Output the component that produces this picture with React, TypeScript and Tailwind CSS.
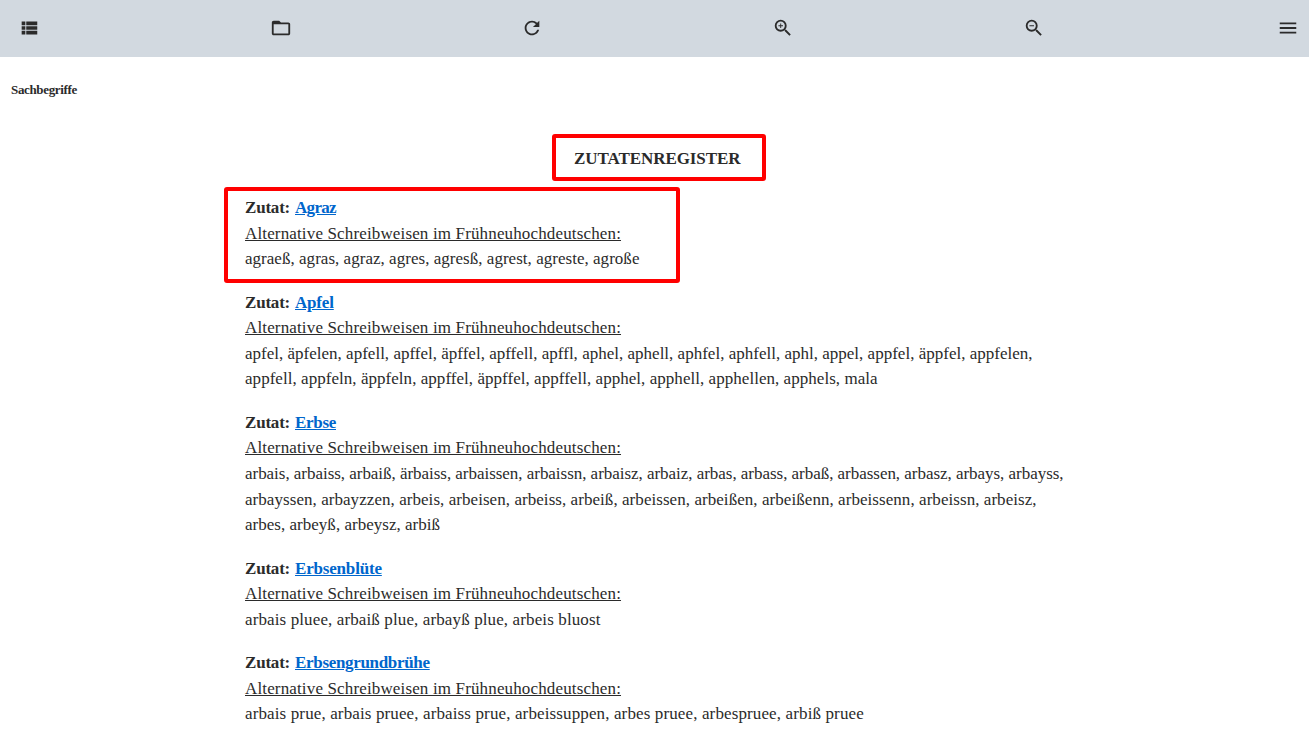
import type { ReactNode } from "react";
import { MdFolderOpen, MdRefresh, MdZoomIn, MdZoomOut, MdMenu } from "react-icons/md";

function ListIcon() {
  return (
    <svg viewBox="0 0 24 24" className="size-[22px]" fill="currentColor">
      <path d="M4 14h4v-4H4v4zm0 5h4v-4H4v4zM4 9h4V5H4v4zm5 5h12v-4H9v4zm0 5h12v-4H9v4zM9 5v4h12V5H9z" />
    </svg>
  );
}

interface Line {
  text: string;
  tracking: string;
}

interface Entry {
  name: string;
  tracking: string;
  lines: Line[];
  marked?: boolean;
}

const entries: Entry[] = [
  {
    name: "Agraz",
    tracking: "tracking-[-0.68px]",
    marked: true,
    lines: [
      { text: "agraeß, agras, agraz, agres, agresß, agrest, agreste, agroße", tracking: "tracking-[0.03px]" },
    ],
  },
  {
    name: "Apfel",
    tracking: "tracking-[-0.18px]",
    lines: [
      {
        text: "apfel, äpfelen, apfell, apffel, äpffel, apffell, apffl, aphel, aphell, aphfel, aphfell, aphl, appel, appfel, äppfel, appfelen,",
        tracking: "tracking-[0.008px]",
      },
      {
        text: "appfell, appfeln, äppfeln, appffel, äppffel, appffell, apphel, apphell, apphellen, apphels, mala",
        tracking: "tracking-[0.04px]",
      },
    ],
  },
  {
    name: "Erbse",
    tracking: "tracking-[-0.3px]",
    lines: [
      {
        text: "arbais, arbaiss, arbaiß, ärbaiss, arbaissen, arbaissn, arbaisz, arbaiz, arbas, arbass, arbaß, arbassen, arbasz, arbays, arbayss,",
        tracking: "tracking-[-0.033px]",
      },
      {
        text: "arbayssen, arbayzzen, arbeis, arbeisen, arbeiss, arbeiß, arbeissen, arbeißen, arbeißenn, arbeissenn, arbeissn, arbeisz,",
        tracking: "tracking-[0.056px]",
      },
      { text: "arbes, arbeyß, arbeysz, arbiß", tracking: "tracking-[0.02px]" },
    ],
  },
  {
    name: "Erbsenblüte",
    tracking: "tracking-[-0.18px]",
    lines: [{ text: "arbais pluee, arbaiß plue, arbayß plue, arbeis bluost", tracking: "tracking-[0.117px]" }],
  },
  {
    name: "Erbsengrundbrühe",
    tracking: "tracking-[-0.32px]",
    lines: [
      {
        text: "arbais prue, arbais pruee, arbaiss prue, arbeissuppen, arbes pruee, arbespruee, arbiß pruee",
        tracking: "tracking-[0.125px]",
      },
    ],
  },
];

function Tool({ children }: { children: ReactNode }) {
  return <button className="flex w-[251px] shrink-0 text-[22px]">{children}</button>;
}

function EntryBlock({ entry }: { entry: Entry }) {
  return (
    <div className="relative mb-[17.8px]">
      {entry.marked && (
        <div className="absolute -top-[8.1px] -left-[21px] h-[96px] w-[456px] rounded-[3px] border-4 border-[#ff0000]" />
      )}
      <p className="flex font-bold">
        <span className="w-[50px] tracking-[-0.2px]">Zutat:</span>
        <a className={`text-[#0066cc] underline ${entry.tracking}`}>{entry.name}</a>
      </p>
      <p className="tracking-[0.146px] underline">Alternative Schreibweisen im Frühneuhochdeutschen:</p>
      {entry.lines.map((line) => (
        <p key={line.text} className={line.tracking}>
          {line.text}
        </p>
      ))}
    </div>
  );
}

export default function App() {
  return (
    <div className="h-[735px] overflow-hidden bg-white font-['Liberation_Serif',serif] text-[17px] leading-[25.6px] whitespace-nowrap text-[#2b2b2b]">
      <header className="flex h-[56px] items-center border-b border-[#d2d9e0] bg-[#d2d9e0] pl-[17.6px] box-content">
        <Tool>
          <ListIcon />
        </Tool>
        <div className="ml-[1px] flex">
          <Tool>
            <MdFolderOpen />
          </Tool>
          <Tool>
            <MdRefresh />
          </Tool>
          <Tool>
            <MdZoomIn />
          </Tool>
          <Tool>
            <MdZoomOut />
          </Tool>
        </div>
        <button className="ml-[3.2px] text-[22px]">
          <MdMenu />
        </button>
      </header>
      <div className="pt-[20px] pl-[11px] text-[13px] font-bold tracking-[-0.35px]">Sachbegriffe</div>
      <main className="pt-[43.5px] pl-[245px]">
        <h1 className="relative mb-[23.4px] ml-[329px] w-[167px] font-bold tracking-[-0.07px]">
          ZUTATENREGISTER
          <span className="absolute -top-[12px] -left-[22px] h-[47px] w-[214px] rounded-[3px] border-4 border-[#ff0000]" />
        </h1>
        {entries.map((entry) => (
          <EntryBlock key={entry.name} entry={entry} />
        ))}
      </main>
    </div>
  );
}
